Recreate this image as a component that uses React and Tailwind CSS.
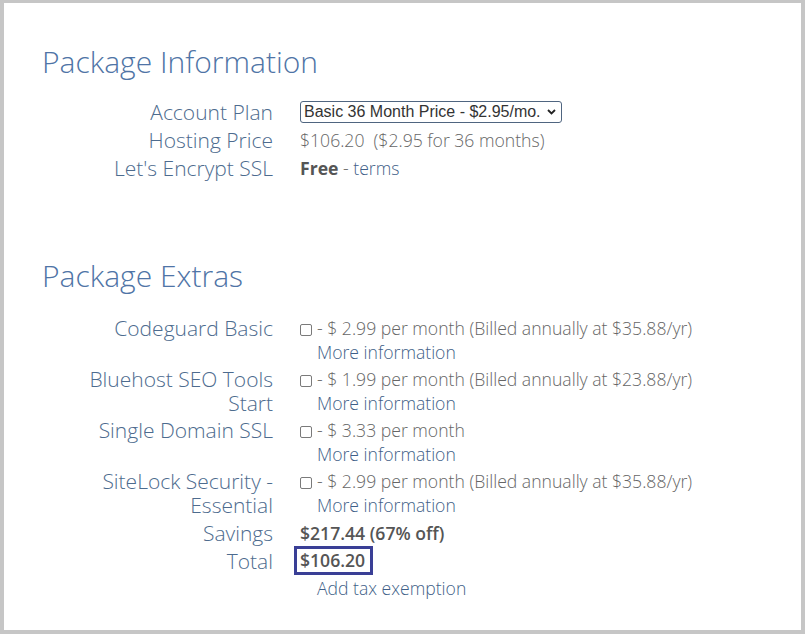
const extras = [
  { label: ['Codeguard Basic'], price: '2.99', billed: '35.88' },
  { label: ['Bluehost SEO Tools', 'Start'], price: '1.99', billed: '23.88' },
  { label: ['Single Domain SSL'], price: '3.33' },
  { label: ['SiteLock Security -', 'Essential'], price: '2.99', billed: '35.88' },
];

function Label({ lines, className = '' }) {
  return (
    <div className={`text-right text-[21px] font-light leading-[24px] text-[#4d6b8e] ${className}`}>
      {lines.map((l) => (
        <div key={l}>{l}</div>
      ))}
    </div>
  );
}

function Checkbox() {
  return <span className="mr-[5px] inline-block h-[12px] w-[12px] rounded-[2px] border border-[#7a7a7a] bg-white align-[-1px]" />;
}

export default function App() {
  return (
    <div
      className="box-border h-[634px] w-[805px] border-t-[3px] border-r-[4px] border-b-[4px] border-l-[4px] border-[#c6c6c6] bg-white pl-[38px] pt-[40px]"
      style={{ fontFamily: "'Open Sans', sans-serif" }}
    >
      <h1 className="text-[30px] font-light leading-[38px] text-[#4f74a6]">Package Information</h1>

      <div className="mt-[19px] grid grid-cols-[231px_1fr] gap-x-[27px] gap-y-[4px]">
        <Label lines={['Account Plan']} />
        <div className="flex items-center">
          <div
            className="flex h-[22px] items-center gap-[6px] rounded-[3px] border border-[#4f6580] pl-[3px] pr-[5px] text-[16px] text-[#333]"
            style={{ fontFamily: "'Liberation Sans', Arial, sans-serif" }}
          >
            <span>Basic 36 Month Price - $2.95/mo.</span>
            <svg width="9" height="6" viewBox="0 0 9 6">
              <path d="M1 1l3.5 3.5L8 1" fill="none" stroke="#222" strokeWidth="1.8" />
            </svg>
          </div>
        </div>

        <Label lines={['Hosting Price']} />
        <div className="text-[17.6px] font-light leading-[24px] text-[#666]">$106.20&nbsp; ($2.95 for 36 months)</div>

        <Label lines={["Let's Encrypt SSL"]} />
        <div className="text-[17.6px] leading-[24px] text-[#666]">
          <span className="font-bold text-[#555]">Free</span>
          <span className="font-light"> - </span>
          <span className="font-light text-[#3f5f88]">terms</span>
        </div>
      </div>

      <h2 className="mt-[77px] text-[30px] font-light leading-[38px] text-[#4f74a6]">Package Extras</h2>

      <div className="mt-[21px] grid grid-cols-[231px_1fr] gap-x-[27px] gap-y-[3px]">
        {extras.map((e) => (
          <div key={e.label[0]} className="contents">
            <Label lines={e.label} />
            <div className="text-[17.6px] font-light leading-[24px] text-[#666]">
              <div>
                <Checkbox />- $ {e.price} per month{e.billed && ` (Billed annually at $${e.billed}/yr)`}
              </div>
              <div className="pl-[17px] text-[#3f5f88]">More information</div>
            </div>
          </div>
        ))}

        <Label lines={['Savings']} className="mt-[1px]" />
        <div className="mt-[1px] text-[17.6px] font-semibold leading-[24px] text-[#555]">$217.44 (67% off)</div>

        <div className="-mt-[2px] flex items-center justify-end">
          <Label lines={['Total']} />
        </div>
        <div className="-mt-[2px] flex">
          <div className="-ml-[6px] border-[3px] border-[#3a3f96] pl-[3px] pr-[5px] text-[17.6px] font-semibold leading-[23px] text-[#555]">
            $106.20
          </div>
        </div>

        <div />
        <div className="-mt-[2px] pl-[17px] text-[17.6px] font-light leading-[24px] text-[#3f5f88]">Add tax exemption</div>
      </div>
    </div>
  );
}
